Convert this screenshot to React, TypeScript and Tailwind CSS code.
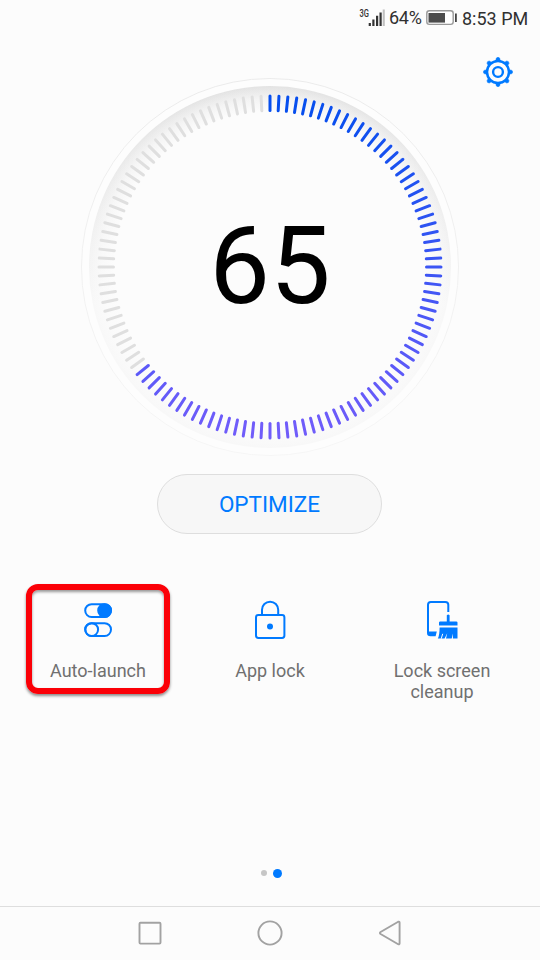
import React from 'react';

const TICKS = 120;
const SCORE = 65;

function tickColor(i: number) {
  const t = (1 - Math.cos((i / TICKS) * 2 * Math.PI)) / 2;
  const mix = (a: number, b: number) => Math.round(a + (b - a) * t);
  return `rgb(${mix(6, 112)}, ${mix(78, 92)}, ${mix(238, 250)})`;
}

function Gauge() {
  const active = (TICKS * SCORE) / 100;
  return (
    <svg viewBox="0 0 380 380" className="col-start-1 row-start-1 h-[380px] w-[380px]">
      <defs>
        <linearGradient id="rim" x1="0" y1="0" x2="0" y2="1">
          <stop offset="0" stopColor="#e3e3e3" />
          <stop offset="0.3" stopColor="#ededed" />
          <stop offset="0.6" stopColor="#f8f8f8" />
          <stop offset="1" stopColor="#f8f8f8" />
        </linearGradient>
        <linearGradient id="outline" x1="0" y1="0" x2="0" y2="1">
          <stop offset="0" stopColor="#ebebeb" />
          <stop offset="1" stopColor="#f6f6f6" />
        </linearGradient>
        <radialGradient id="face" gradientUnits="userSpaceOnUse" cx="190" cy="190" r="181">
          <stop offset="0.86" stopColor="#fcfcfc" />
          <stop offset="0.93" stopColor="#fcfcfc" stopOpacity="0.65" />
          <stop offset="1" stopColor="#fcfcfc" stopOpacity="0" />
        </radialGradient>
      </defs>
      <circle cx="190" cy="190" r="188.5" fill="#fdfdfd" stroke="url(#outline)" />
      <circle cx="190" cy="190" r="181" fill="url(#rim)" />
      <circle cx="190" cy="190" r="181.5" fill="url(#face)" />
      {Array.from({ length: TICKS }, (_, i) => (
        <line
          key={i}
          x1="190"
          x2="190"
          y1="19"
          y2="33.5"
          stroke={i < active ? tickColor(i) : '#dfdfdf'}
          strokeWidth="3"
          strokeLinecap="round"
          transform={`rotate(${i * 3} 190 190)`}
        />
      ))}
    </svg>
  );
}

function GearIcon() {
  return (
    <svg viewBox="0 0 32 32" className="h-8 w-8" fill="none" stroke="#007aff">
      <circle cx="16" cy="16" r="11" strokeWidth="2.5" />
      <circle cx="16" cy="16" r="4.9" strokeWidth="2.4" />
      {[0, 45, 90, 135, 180, 225, 270, 315].map((a) => (
        <path key={a} d="M14.4 2Q16 .6 17.6 2L18.3 4.8H13.7Z" fill="#007aff" strokeWidth=".5" transform={`rotate(${a} 16 16)`} />
      ))}
    </svg>
  );
}

function StatusBar() {
  return (
    <header className="flex h-9 text-[#303030]">
      <svg viewBox="0 0 30 36" className="ml-[358px] h-9 w-[30px] shrink-0">
        <text x="1.5" y="17" fontSize="10" fontWeight="500" textLength="9.5" lengthAdjust="spacingAndGlyphs" fill="#333" className="font-['Roboto',sans-serif]">3G</text>
        <path d="M10.7 23h2.2v3h-2.2zM14.3 19.5h2.2V26h-2.2zM18 15.8h2.2V26H18zM21.5 12.5h2.2V26h-2.2z" fill="#333" />
        <path d="M24.7 9.5h2.1V26h-2.1z" fill="#c0c0c0" />
      </svg>
      <span className="mt-[6px] w-[37px] whitespace-nowrap pl-[1px] text-[18px] leading-[24px] tracking-[-0.3px]">64%</span>
      <svg viewBox="0 0 32 36" className="h-9 w-8 shrink-0">
        <rect x="1.8" y="10.8" width="26.4" height="13.6" rx="2.6" fill="#fff" stroke="#999" strokeWidth="1.4" />
        <path d="M3.5 13h16.5v9.6H3.5z" fill="#4c4c4c" />
        <path d="M30 13.5h1.8v8.5H30z" fill="#444" />
      </svg>
      <span className="ml-[5px] mt-[7px] whitespace-nowrap text-[18px] leading-[24px]">8:53 PM</span>
    </header>
  );
}

function AutoLaunchIcon() {
  return (
    <svg viewBox="0 0 40 40" className="h-10 w-10 shrink-0" fill="none" stroke="#007aff" strokeWidth="2">
      <rect x="7.2" y="4.2" width="25.8" height="12.8" rx="6.4" />
      <circle cx="26.6" cy="10.6" r="6.4" fill="#007aff" />
      <rect x="7.2" y="23.2" width="25.8" height="12.8" rx="6.4" />
      <circle cx="13.7" cy="29.6" r="6.4" />
    </svg>
  );
}

function LockIcon() {
  return (
    <svg viewBox="0 0 40 40" className="h-10 w-10 shrink-0" fill="none" stroke="#007aff" strokeWidth="2">
      <rect x="6" y="15" width="28.4" height="23" rx="2.4" />
      <path d="M12 15V9.8a8.1 8.1 0 0 1 16.2 0V15" />
      <circle cx="20" cy="26.5" r="3" fill="#007aff" stroke="none" />
    </svg>
  );
}

function CleanupIcon() {
  return (
    <svg viewBox="0 0 40 40" className="h-10 w-10 shrink-0" fill="none">
      <path d="M26.3 12V4.8Q26.3 2 23.3 2H8.8Q6 2 6 4.8V32" stroke="#007aff" strokeWidth="2" />
      <path d="M5 31L7 31.6H14.8L13.6 36.2H8.5Q5 36.2 5 33Z" fill="#007aff" />
      <path d="M24.8 15.2Q26.2 13.6 27.6 15.2V21.4H34.2Q35.5 21.4 35.5 22.6V25.5H17V22.6Q17 21.4 18.3 21.4H24.8Z" fill="#007aff" />
      <path d="M17.6 27.6H35.5V38.6H30.9V33.4L29.7 38.6H24L25.2 33.2L22.6 38.6H15.8Q17.6 35.5 17.6 27.6Z" fill="#007aff" />
      <path d="M20.7 33.8L19.2 38.8" stroke="#fcfcfc" strokeWidth="1" />
    </svg>
  );
}

function Feature({ icon, children }: { icon: React.ReactNode; children: React.ReactNode }) {
  return (
    <div className="flex w-[172px] flex-col items-center pt-4 text-center text-[18px] leading-[21px] text-[#707070]">
      {icon}
      <div className="mt-5">{children}</div>
    </div>
  );
}

export default function App() {
  return (
    <main className="flex h-[960px] w-[540px] flex-col overflow-hidden bg-[#fcfcfc] font-['Roboto',sans-serif]">
      <StatusBar />
      <div className="flex h-[41px] justify-end pr-[26px] pt-5">
        <GearIcon />
      </div>
      <section className="grid h-[380px] place-items-center">
        <Gauge />
        <div className="z-10 col-start-1 row-start-1 mt-[-2px] text-[108px] leading-[120px] text-black">65</div>
      </section>
      <button className="ml-[157px] mt-[17px] h-[60px] w-[225px] shrink-0 rounded-full border border-[#dedede] bg-[#f7f7f7] pt-[2px] text-[22.5px] text-[#007aff]">
        OPTIMIZE
      </button>
      <section className="mt-[50px] flex h-[121px] shrink-0 justify-center">
        <div className="relative">
          <Feature icon={<AutoLaunchIcon />}>Auto-launch</Feature>
          <div className="absolute left-[14px] top-0 h-[110px] w-[144px] rounded-[12px] border-[6px] border-[#fb0007] shadow-[0_2px_3px_rgba(0,0,0,0.45),inset_0_2px_3px_rgba(0,0,0,0.4)]" />
        </div>
        <Feature icon={<LockIcon />}>App lock</Feature>
        <Feature icon={<CleanupIcon />}>Lock screen<br />cleanup</Feature>
      </section>
      <div className="mt-auto flex h-[10px] items-center gap-[6px] pl-[261px]">
        <span className="h-[6px] w-[6px] rounded-full bg-[#c6c6c6]" />
        <span className="h-[9px] w-[9px] rounded-full bg-[#007aff]" />
      </div>
      <nav className="mt-[28px] flex h-[54px] shrink-0 justify-center gap-20 border-t border-[#dedede] pt-[6px]">
        <svg viewBox="0 0 40 40" className="h-10 w-10" fill="none" stroke="#a2a2a2" strokeWidth="1.9">
          <rect x="9.5" y="9.8" width="21" height="20.8" rx="1" />
        </svg>
        <svg viewBox="0 0 40 40" className="h-10 w-10" fill="none" stroke="#a2a2a2" strokeWidth="1.9">
          <circle cx="20" cy="20" r="11.6" />
        </svg>
        <svg viewBox="0 0 40 40" className="h-10 w-10" fill="none" stroke="#a2a2a2" strokeWidth="1.9" strokeLinejoin="round">
          <path d="M10.6 19L28.2 8.7Q29.6 8.2 29.6 9.8V30.2Q29.6 31.8 28.2 31.2L10.6 21Q9.2 20 10.6 19Z" />
        </svg>
      </nav>
    </main>
  );
}
